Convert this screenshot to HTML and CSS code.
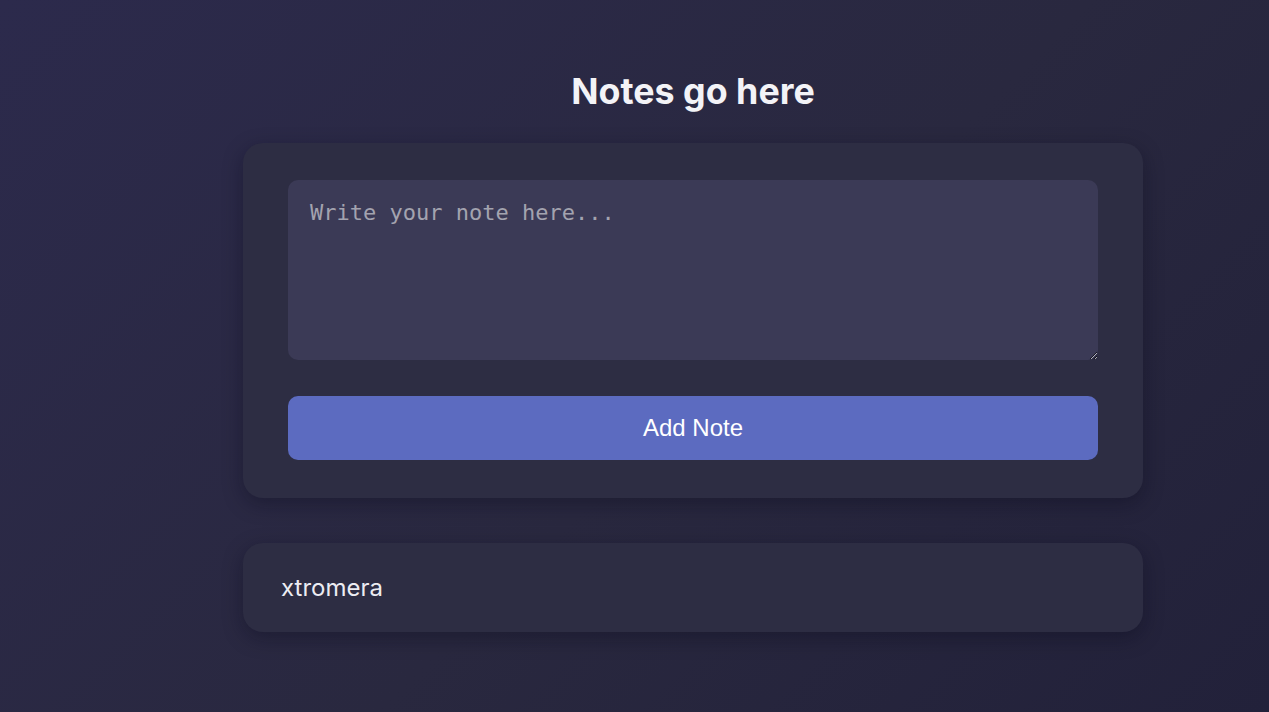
FILE: index.html
```html
<!DOCTYPE html>
<html lang="en">
<head>
<meta charset="utf-8">
<title>Notes</title>
<link rel="stylesheet" href="styles.css">
</head>
<body>
<main class="app">
  <h1 class="title">Notes go here</h1>
  <section class="card composer">
    <textarea class="note-input" placeholder="Write your note here..."></textarea>
    <button class="add-btn" type="button">Add Note</button>
  </section>
  <ul class="notes">
    <li class="card note">xtromera</li>
  </ul>
</main>
</body>
</html>
```

FILE: styles.css
```css
html, body {
  margin: 0;
  height: 100%;
}
body {
  background: linear-gradient(135deg, #2c2a4c 0%, #29283f 55%, #22213a 100%);
  font-family: Inter, "Noto Sans", sans-serif;
  color: #f0f0f5;
  padding-left: 117px;
  box-sizing: border-box;
}
.app {
  width: 900px;
  margin: 0 auto;
  padding-top: 69px;
  display: flex;
  flex-direction: column;
}
.title {
  margin: 0 0 30px;
  text-align: center;
  font-size: 35.8px;
  font-weight: 700;
  line-height: 44px;
  color: #f3f3f7;
}
.card {
  background: #2d2d43;
  border-radius: 20px;
  box-shadow: 0 6px 20px rgba(10, 10, 25, 0.35);
}
.composer {
  padding: 37px 45px 38px;
  display: flex;
  flex-direction: column;
  gap: 36px;
}
.note-input {
  height: 180px;
  box-sizing: border-box;
  background: #3b3a56;
  border: none;
  border-radius: 10px;
  padding: 20px 22px;
  font-family: "DejaVu Sans Mono", monospace;
  font-size: 22px;
  color: #e6e6ee;
  outline: none;
  resize: vertical;
}
.note-input::placeholder {
  color: #a3a3af;
}
.add-btn {
  height: 64px;
  border: none;
  border-radius: 10px;
  background: #5c6bc0;
  color: #ffffff;
  font-family: "Liberation Sans", Arial, sans-serif;
  font-size: 24px;
  cursor: pointer;
}
.notes {
  list-style: none;
  margin: 45px 0 0;
  padding: 0;
}
.note {
  height: 89px;
  box-sizing: border-box;
  padding: 0 38px;
  display: flex;
  align-items: center;
  font-size: 24px;
  color: #ececf2;
}
```
